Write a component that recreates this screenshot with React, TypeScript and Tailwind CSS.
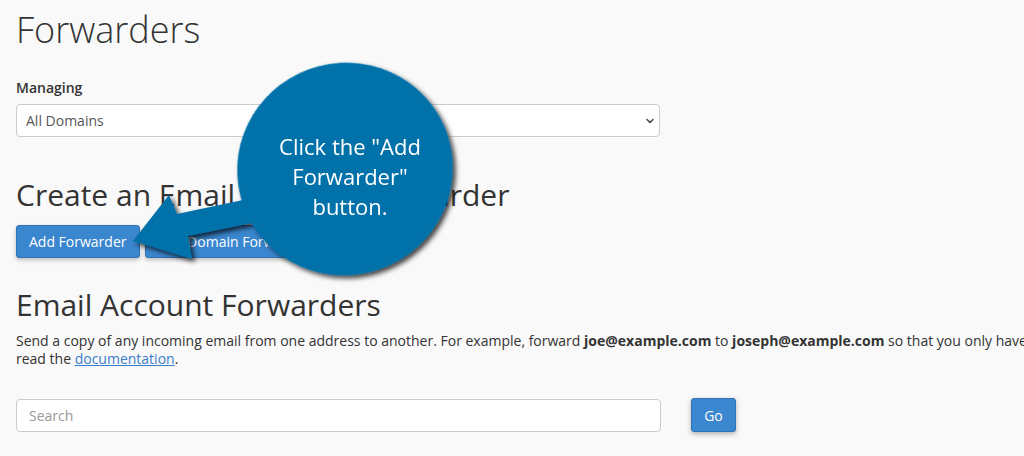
import { ChevronDown } from "lucide-react";

const font = { fontFamily: '"Open Sans", "Noto Sans", sans-serif' };

export default function App() {
  return (
    <div
      className="relative h-[456px] w-[1024px] overflow-hidden bg-[#f9f9f9] text-[#333]"
      style={font}
    >
      <div className="w-[1400px] px-4">
        <h1 className="pt-[6px] text-[36px] font-light leading-[48px] text-[#333]">Forwarders</h1>

        {/* Managing */}
        <div className="mt-[24px]">
          <label className="block text-[14px] font-semibold leading-[20px]">Managing</label>
          <div className="mt-[6px] flex h-[33px] w-[644px] items-center justify-between rounded-[4px] border border-[#ccc] bg-white pl-[9px] pr-[3px] text-[14px] text-[#555]">
            <span>All Domains</span>
            <ChevronDown size={12} strokeWidth={3} className="text-[#444]" />
          </div>
        </div>

        {/* Create */}
        <h2 className="mt-[40px] text-[30px] font-normal leading-[36px]">
          Create an Email Account Forwarder
        </h2>
        <div className="mt-[12px] flex gap-[5px]">
          <button className="h-[33px] rounded-[3px] border border-[#2f73b5] bg-[#3a87cf] px-[12px] text-[14px] text-white shadow-[0_2px_4px_rgba(0,0,0,0.25)]">
            Add Forwarder
          </button>
          <button className="h-[33px] rounded-[3px] border border-[#2f73b5] bg-[#3a87cf] px-[12px] text-[14px] text-white shadow-[0_2px_4px_rgba(0,0,0,0.25)]">
            Add Domain Forwarder
          </button>
        </div>

        {/* Email Account Forwarders */}
        <h2 className="mt-[27px] text-[30px] font-normal leading-[40px]">Email Account Forwarders</h2>
        <p className="mt-[7px] text-[14px] leading-[18px]">
          Send a copy of any incoming email from one address to another. For example, forward{" "}
          <b>joe@example.com</b> to <b>joseph@example.com</b> so that you only have to check one
          account. For more information,
          <br />
          read the{" "}
          <a href="#" className="text-[#3a7fc8] underline">
            documentation
          </a>
          .
        </p>

        <div className="mt-[30px] flex items-center gap-[30px]">
          <input
            placeholder="Search"
            className="h-[33px] w-[645px] rounded-[4px] border border-[#ccc] bg-white px-[12px] text-[14px] text-[#555] placeholder:text-[#999] outline-none"
          />
          <button className="h-[34px] w-[45px] rounded-[3px] border border-[#2f73b5] bg-[#3a87cf] text-[14px] text-white shadow-[0_2px_5px_rgba(0,0,0,0.3)]">
            Go
          </button>
        </div>
      </div>

      {/* Callout overlay */}
      <svg className="pointer-events-none absolute left-0 top-0" width="1024" height="456">
        <defs>
          <filter id="sh" x="-20%" y="-20%" width="140%" height="140%">
            <feDropShadow dx="3" dy="3" stdDeviation="2.5" floodColor="#000" floodOpacity="0.75" />
          </filter>
        </defs>
        <g filter="url(#sh)" fill="#0071a9">
          <polygon points="133,241 169,195 177,214 262,196 272,219 188,236 192,259" />
          <ellipse cx="345" cy="169" rx="108" ry="106" transform="rotate(-20 345 169)" />
        </g>
      </svg>
      <div className="pointer-events-none absolute left-[250px] top-[131px] w-[200px] text-center text-[22px] leading-[30px] text-white">
        Click the "Add
        <br />
        Forwarder"
        <br />
        button.
      </div>
    </div>
  );
}
